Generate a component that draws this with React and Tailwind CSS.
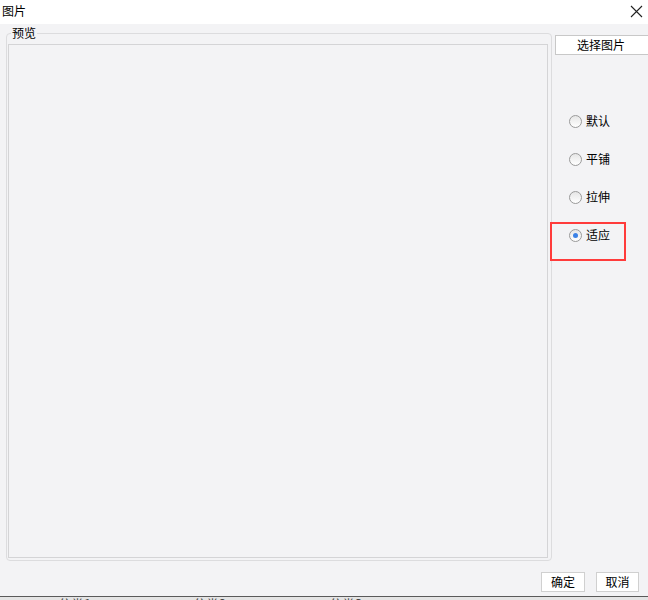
import React, { useState } from "react";

const modos = ["默认", "平铺", "拉伸", "适应"];

const Radio = ({ checked }) => (
  <span className="w-[13px] h-[13px] rounded-full border border-[#9a9a9a] bg-gradient-to-b from-[#e6e6e6] to-white flex items-center justify-center">
    {checked && <span className="w-[5px] h-[5px] rounded-full bg-[#3c82e6]" />}
  </span>
);

export default function App() {
  const [modo, setModo] = useState("适应"); // modo de ajuste de la imagen

  return (
    <div
      className="w-[648px] h-[600px] flex flex-col bg-[#f3f3f5] text-[12px] text-black overflow-hidden"
      style={{ fontFamily: '"Noto Sans CJK SC", "Liberation Sans", sans-serif' }}
    >
      {/* barra de título */}
      <div className="h-[24px] bg-white flex items-center justify-between pl-[2px] pr-[5px]">
        <span className="leading-none mt-[-2px]">图片</span>
        <svg width="13" height="13" viewBox="0 0 13 13" className="mt-[-1px]">
          <path d="M1 1 L12 12 M12 1 L1 12" stroke="#222" strokeWidth="1.1" />
        </svg>
      </div>

      <div className="flex-1 flex flex-col">
        <div className="flex">
          {/* grupo de vista previa */}
          <div className="shrink-0 ml-[6px] mt-[9px] relative w-[546px] h-[528px] border border-[#dcdcde] rounded-[4px] pt-[10px] pl-[1px]">
            <span className="absolute left-[4px] top-[-7px] px-[1px] bg-[#f3f3f5] leading-none">预览</span>
            <div className="w-[540px] h-[514px] border border-[#d4d4d6] bg-[#f3f3f5]" />
          </div>

          {/* columna derecha */}
          <div className="ml-[3px] flex-1 min-w-0 flex flex-col">
            <button className="shrink-0 mt-[11px] h-[20px] w-[96px] bg-white border border-[#c8c8c8] leading-none pr-[4px]">
              选择图片
            </button>
            <div className="mt-[58px] flex flex-col gap-[22px] pl-[14px]">
              {modos.map((m) => (
                <label
                  key={m}
                  onClick={() => setModo(m)}
                  className="relative h-[16px] flex items-center gap-[4px] cursor-pointer"
                >
                  <Radio checked={modo === m} />
                  <span className="leading-none">{m}</span>
                  {m === "适应" && (
                    <span className="absolute left-[-19px] top-[-5px] w-[76px] h-[39px] border-2 border-[#ff3b3b]" />
                  )}
                </label>
              ))}
            </div>
          </div>
        </div>

        {/* botones */}
        <div className="mt-[11px] flex justify-end gap-[11px] pr-[9px]">
          <button className="w-[44px] h-[20px] bg-white border border-[#d0d0d0] leading-none">确定</button>
          <button className="w-[43px] h-[20px] bg-white border border-[#d0d0d0] leading-none">取消</button>
        </div>
      </div>

      {/* franja inferior de la ventana de fondo */}
      <div className="h-[1px] bg-[#5a5a5a]" />
      <div className="h-[3px] bg-[#e4e4e4] overflow-hidden relative text-[#444] text-[13px]">
        <span className="absolute left-[58px] top-[0px] leading-none">分类1</span>
        <span className="absolute left-[193px] top-[0px] leading-none">分类2</span>
        <span className="absolute left-[329px] top-[0px] leading-none">分类3</span>
      </div>
    </div>
  );
}
